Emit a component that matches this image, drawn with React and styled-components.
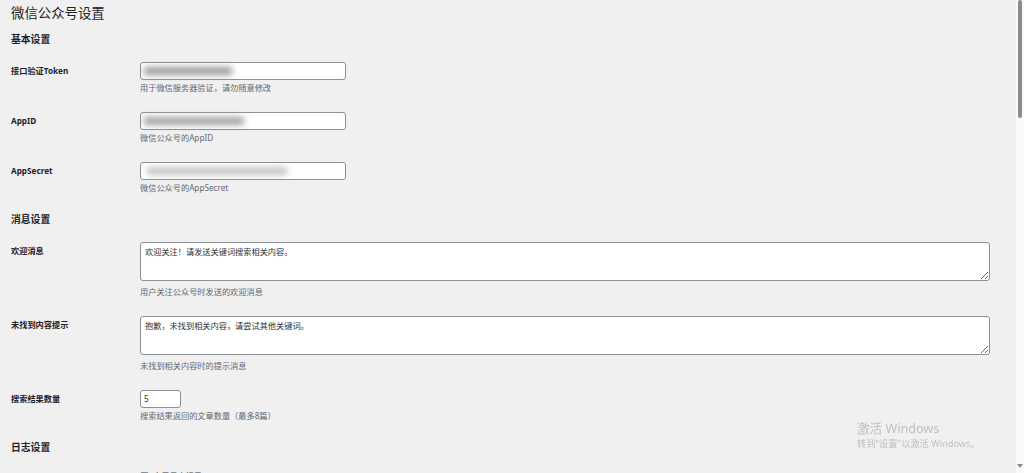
import React from "react";
import styled, { createGlobalStyle } from "styled-components";

const GlobalStyle = createGlobalStyle`
  body {
    margin: 0;
    background: #f0f0f1;
    color: #1d2327;
    font-family: "Noto Sans", "Noto Sans CJK SC", sans-serif;
  }
`;

const Wrap = styled.div`
  padding: 4px 0 0 11px;
  box-sizing: border-box;
`;

const Title = styled.h1`
  margin: 0;
  font-size: 13.4px;
  line-height: 19px;
  font-weight: 400;
  color: #1d2327;
`;

const SectionTitle = styled.h2`
  margin: 10px 0 6px;
  font-size: 9.8px;
  line-height: 14px;
  font-weight: 700;
  color: #1d2327;
`;

const Row = styled.div`
  display: grid;
  grid-template-columns: 129px 1fr;
  padding: 9px 0;
`;

const Label = styled.div`
  padding-top: 3px;
  font-size: 8.2px;
  line-height: 12px;
  font-weight: 700;
  color: #1d2327;
`;

const Field = styled.div`
  display: flex;
  flex-direction: column;
  align-items: flex-start;
`;

const InputBox = styled.div`
  position: relative;
  width: ${(p) => p.$w}px;
  height: 18px;
  box-sizing: border-box;
  border: 1px solid #8c8f94;
  border-radius: 3px;
  background: #fff;
  font-size: 8.2px;
  line-height: 16px;
  padding: 0 3px;
  color: #2c3338;
`;

const Redacted = styled.span`
  position: absolute;
  left: ${(p) => p.$l}px;
  top: 4px;
  width: ${(p) => p.$w}px;
  height: 8px;
  background: ${(p) => p.$c};
  filter: blur(3px);
`;

const TextArea = styled.textarea`
  display: block;
  width: 850px;
  height: 39px;
  box-sizing: border-box;
  margin: 0;
  padding: 3px 4px;
  border: 1px solid #8c8f94;
  border-radius: 3px;
  background: #fff;
  font-family: "Noto Sans", "Noto Sans CJK SC", sans-serif;
  font-size: 8.2px;
  line-height: 12px;
  color: #2c3338;
  outline: none;
`;

const Description = styled.p`
  margin: ${(p) => p.$gap}px 0 0;
  font-size: 8.2px;
  line-height: 12px;
  color: #646970;
`;

const CheckLabel = styled.label`
  display: flex;
  align-items: center;
  gap: 4px;
  font-size: 8.2px;
  line-height: 12px;
  color: #3c434a;
`;

const CheckBox = styled.span`
  width: 9px;
  height: 9px;
  box-sizing: border-box;
  border: 1px solid #8c8f94;
  border-radius: 2px;
  background: #fff;
`;

const Watermark = styled.div`
  position: fixed;
  left: 857px;
  top: 420px;
  color: #c0c0c0;
  font-family: "Noto Sans", "Noto Sans CJK SC", sans-serif;
  pointer-events: none;
`;

const WmTitle = styled.div`
  font-size: 12.6px;
  line-height: 17px;
`;

const WmSub = styled.div`
  font-size: 9.2px;
  line-height: 13px;
`;

const ScrollTrack = styled.div`
  position: fixed;
  top: 0;
  right: 0;
  bottom: 0;
  width: 8px;
  background: #f9f9f9;
  display: flex;
  flex-direction: column;
  justify-content: space-between;
  align-items: center;
`;

const ScrollThumb = styled.div`
  width: 4px;
  height: 118px;
  border-radius: 2px;
  background: #8b8b8b;
`;

const ScrollArrow = styled.div`
  margin-bottom: 5px;
  width: 0;
  height: 0;
  border-left: 3px solid transparent;
  border-right: 3px solid transparent;
  border-top: 4px solid #8b8b8b;
`;

export default function App() {
  return (
    <>
      <GlobalStyle />
      <Wrap>
        <Title>微信公众号设置</Title>

        <SectionTitle>基本设置</SectionTitle>
        <Row>
          <Label>接口验证Token</Label>
          <Field>
            <InputBox $w={206}>
              <Redacted $l={3} $w={88} $c="#9a9a9a" />
            </InputBox>
            <Description $gap={2}>用于微信服务器验证，请勿随意修改</Description>
          </Field>
        </Row>
        <Row>
          <Label>AppID</Label>
          <Field>
            <InputBox $w={206}>
              <Redacted $l={3} $w={100} $c="#a2a2a2" />
            </InputBox>
            <Description $gap={2}>微信公众号的AppID</Description>
          </Field>
        </Row>
        <Row>
          <Label>AppSecret</Label>
          <Field>
            <InputBox $w={206}>
              <Redacted $l={6} $w={140} $c="#c4c4c4" />
            </InputBox>
            <Description $gap={2}>微信公众号的AppSecret</Description>
          </Field>
        </Row>

        <SectionTitle>消息设置</SectionTitle>
        <Row>
          <Label>欢迎消息</Label>
          <Field>
            <TextArea defaultValue="欢迎关注！请发送关键词搜索相关内容。" />
            <Description $gap={5}>用户关注公众号时发送的欢迎消息</Description>
          </Field>
        </Row>
        <Row>
          <Label>未找到内容提示</Label>
          <Field>
            <TextArea defaultValue="抱歉，未找到相关内容，请尝试其他关键词。" />
            <Description $gap={5}>未找到相关内容时的提示消息</Description>
          </Field>
        </Row>
        <Row>
          <Label>搜索结果数量</Label>
          <Field>
            <InputBox $w={41}>5</InputBox>
            <Description $gap={2}>搜索结果返回的文章数量（最多8篇）</Description>
          </Field>
        </Row>

        <SectionTitle>日志设置</SectionTitle>
        <Row>
          <Label />
          <Field>
            <CheckLabel>
              <CheckBox />
              启用日志记录
            </CheckLabel>
          </Field>
        </Row>
      </Wrap>
      <Watermark>
        <WmTitle>激活 Windows</WmTitle>
        <WmSub>转到"设置"以激活 Windows。</WmSub>
      </Watermark>
      <ScrollTrack>
        <ScrollThumb />
        <ScrollArrow />
      </ScrollTrack>
    </>
  );
}
